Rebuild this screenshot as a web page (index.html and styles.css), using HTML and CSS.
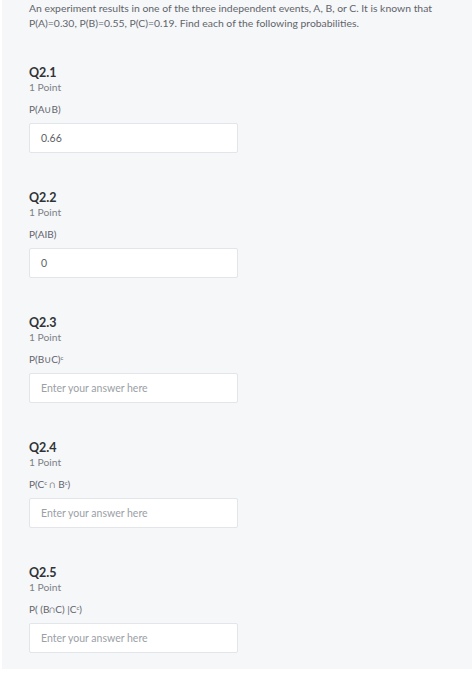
FILE: index.html
```html
<!DOCTYPE html>
<html lang="en">
<head>
<meta charset="utf-8">
<title>Questions</title>
<link rel="stylesheet" href="styles.css">
</head>
<body>
<div class="panel">
  <p class="intro">An experiment results in one of the three independent events, A, B, or C. It is known that P(A)=0.30, P(B)=0.55, P(C)=0.19. Find each of the following probabilities.</p>

  <section class="question">
    <h2 class="q-title">Q2.1</h2>
    <div class="q-points">1 Point</div>
    <div class="q-label">P(A∪B)</div>
    <div class="answer">0.66</div>
  </section>

  <section class="question">
    <h2 class="q-title">Q2.2</h2>
    <div class="q-points">1 Point</div>
    <div class="q-label">P(AIB)</div>
    <div class="answer">0</div>
  </section>

  <section class="question">
    <h2 class="q-title">Q2.3</h2>
    <div class="q-points">1 Point</div>
    <div class="q-label">P(B∪C)<sup>c</sup></div>
    <div class="answer placeholder">Enter your answer here</div>
  </section>

  <section class="question">
    <h2 class="q-title">Q2.4</h2>
    <div class="q-points">1 Point</div>
    <div class="q-label">P(C<sup>c</sup> ∩ B<sup>c</sup>)</div>
    <div class="answer placeholder">Enter your answer here</div>
  </section>

  <section class="question">
    <h2 class="q-title">Q2.5</h2>
    <div class="q-points">1 Point</div>
    <div class="q-label">P( (B∩C) |C<sup>c</sup>)</div>
    <div class="answer placeholder">Enter your answer here</div>
  </section>
</div>
</body>
</html>
```
FILE: styles.css
```css
html, body {
  margin: 0;
  padding: 0;
  background: #ffffff;
}

body {
  font-family: Lato, "Open Sans", "Liberation Sans", sans-serif;
  color: #5c6167;
}

.panel {
  margin-left: 2px;
  width: 443px;
  background: #f6f7f9;
  padding: 1px 0 16px 27px;
}

.intro {
  margin: 0;
  font-size: 10.4px;
  line-height: 15px;
  color: #5f646a;
  padding-right: 24px;
}

.question {
  display: flex;
  flex-direction: column;
  align-items: flex-start;
  margin-top: 37px;
}

.question:first-of-type {
  margin-top: 34px;
}

.q-title {
  margin: 0;
  font-size: 12.5px;
  line-height: 16px;
  font-weight: 700;
  color: #2f3337;
}

.q-points {
  font-size: 10.3px;
  line-height: 13px;
  color: #7d8288;
}

.q-label {
  margin-top: 9px;
  font-size: 10px;
  line-height: 13px;
  color: #5f646a;
}

.q-label sup {
  font-size: 6px;
  line-height: 0;
  vertical-align: 3px;
}

.answer {
  box-sizing: border-box;
  margin-top: 7px;
  width: 209px;
  height: 30px;
  background: #ffffff;
  border: 1px solid #e2e5e9;
  border-radius: 2px;
  padding: 0 11px;
  font-size: 10.5px;
  line-height: 28px;
  color: #5c6167;
}

.answer.placeholder {
  color: #9ba0a6;
}
```
